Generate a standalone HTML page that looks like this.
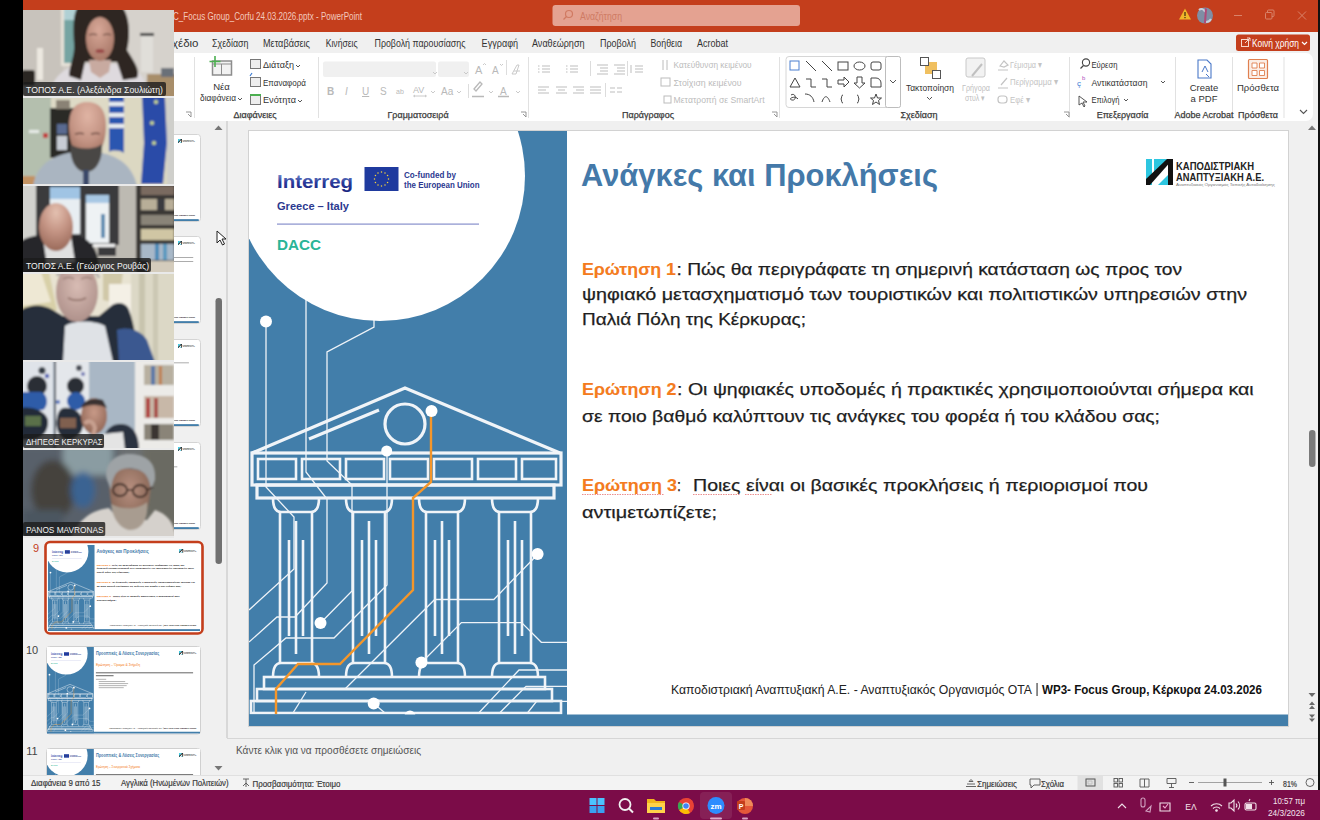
<!DOCTYPE html>
<html><head><meta charset="utf-8">
<style>
*{margin:0;padding:0;box-sizing:border-box}
html,body{width:1320px;height:820px;overflow:hidden;background:#000;font-family:"Liberation Sans",sans-serif}
.a{position:absolute}
#titlebar{left:23px;top:0;width:1295px;height:31px;background:#c43e1c}
#menurow{left:23px;top:31px;width:1295px;height:24px;background:#f0f0f0}
#ribbon{left:23px;top:55px;width:1290px;height:66px;background:#fff;border-radius:0 0 8px 8px}
#work{left:23px;top:121px;width:1295px;height:654px;background:#f0f0f0}
#status{left:23px;top:775px;width:1295px;height:15px;background:#f3f3f3}
#taskbar{left:23px;top:790px;width:1297px;height:30px;background:#7b0d48}
#rstrip{left:1318px;top:0;width:2px;height:790px;background:#111}
#slide{left:249px;top:131px;width:1039px;height:595px;background:#fff;overflow:hidden;box-shadow:0 0 1px #bbb}
.tile{left:23px;width:151px;height:86px;overflow:hidden}
.b{position:absolute;filter:blur(1px)}

</style></head>
<body>
<svg class="a" style="left:0;top:0" width="1320" height="122" viewBox="0 0 1320 122" font-family="Liberation Sans">
<rect x="23" y="0" width="1295" height="32" fill="#c43e1c"/>
<rect x="23" y="32" width="1295" height="90" fill="#f0f0f0"/>
<rect x="23" y="53" width="1290" height="68" rx="7" fill="#fff"/>
<rect x="23" y="53" width="20" height="20" fill="#fff"/>
<text x="173" y="19.5" font-size="10" fill="#f3c9bc" textLength="189" lengthAdjust="spacingAndGlyphs">C_Focus Group_Corfu 24.03.2026.pptx  -  PowerPoint</text>
<rect x="552.5" y="5" width="247.5" height="21" rx="3" fill="#e4a291"/>
<circle cx="569" cy="14" r="3.5" fill="none" stroke="#d07a62" stroke-width="1.2"/><path d="M566.5 16.5L563.5 19.5" stroke="#d07a62" stroke-width="1.3"/>
<text x="580" y="19.5" font-size="10" fill="#cf7b64" textLength="42" lengthAdjust="spacingAndGlyphs">Αναζήτηση</text>
<path d="M1185 8.5L1191 19.5H1179Z" fill="#f0b52a"/><rect x="1184.4" y="12" width="1.2" height="4" fill="#3a2a10"/><rect x="1184.4" y="17" width="1.2" height="1.2" fill="#3a2a10"/>
<circle cx="1205" cy="15.5" r="8" fill="#7f8ea4"/><path d="M1199 10c2-2 5-1 6 2M1211 19c-1 2-3 3-5 3" stroke="#c8d0dc" stroke-width="2" fill="none"/><path d="M1205 8L1207 9L1206 23L1204 23Z" fill="#b04a78"/>
<path d="M1234 15.5h8" stroke="#d9836a" stroke-width="1"/>
<rect x="1265.5" y="12.5" width="6.5" height="6.5" rx="1" fill="none" stroke="#d9836a" stroke-width="1"/><path d="M1267.5 12.5v-1.5a1 1 0 0 1 1-1h4.5a1 1 0 0 1 1 1v4.5a1 1 0 0 1-1 1h-1" fill="none" stroke="#d9836a" stroke-width="1"/>
<path d="M1298 11.5l8 8M1306 11.5l-8 8" stroke="#d9836a" stroke-width="1"/>
<g font-size="10.3" fill="#333">
<text x="172" y="47" textLength="26.5" lengthAdjust="spacingAndGlyphs">χέδιο</text>
<text x="212" y="47" textLength="36.5" lengthAdjust="spacingAndGlyphs">Σχεδίαση</text>
<text x="263" y="47" textLength="47" lengthAdjust="spacingAndGlyphs">Μεταβάσεις</text>
<text x="325.7" y="47" textLength="32" lengthAdjust="spacingAndGlyphs">Κινήσεις</text>
<text x="374.5" y="47" textLength="91" lengthAdjust="spacingAndGlyphs">Προβολή παρουσίασης</text>
<text x="481.6" y="47" textLength="36.5" lengthAdjust="spacingAndGlyphs">Εγγραφή</text>
<text x="532" y="47" textLength="52.5" lengthAdjust="spacingAndGlyphs">Αναθεώρηση</text>
<text x="600" y="47" textLength="36" lengthAdjust="spacingAndGlyphs">Προβολή</text>
<text x="650.5" y="47" textLength="31.5" lengthAdjust="spacingAndGlyphs">Βοήθεια</text>
<text x="697" y="47" textLength="31" lengthAdjust="spacingAndGlyphs">Acrobat</text>
</g>
<rect x="1236" y="34.5" width="74" height="16.5" rx="2.5" fill="#c43e1c"/>
<rect x="1241.5" y="39.5" width="7" height="7" fill="none" stroke="#f8d8cc" stroke-width="1"/><path d="M1245 43l5-5M1247 38h3v3" stroke="#f8d8cc" stroke-width="1" fill="none"/>
<text x="1252" y="46.5" font-size="10" fill="#fff" textLength="47" lengthAdjust="spacingAndGlyphs">Κοινή χρήση</text>
<path d="M1302 42l2.5 2.5 2.5-2.5" stroke="#fff" stroke-width="1.2" fill="none"/>
<!-- separators -->
<g fill="#e1e1e1">
<rect x="194" y="57" width="1" height="61"/><rect x="318" y="57" width="1" height="61"/><rect x="528" y="57" width="1" height="61"/>
<rect x="779" y="57" width="1" height="61"/><rect x="1069" y="57" width="1" height="61"/><rect x="1175" y="57" width="1" height="61"/><rect x="1232" y="57" width="1" height="61"/><rect x="1283.5" y="57" width="1" height="61"/>
</g>
<!-- group labels -->
<g font-size="9" fill="#3c3c3c" stroke="#3c3c3c" stroke-width=".25" text-anchor="middle">
<text x="255" y="117.5">Διαφάνειες</text>
<text x="418" y="117.5">Γραμματοσειρά</text>
<text x="648" y="117.5">Παράγραφος</text>
<text x="919" y="117.5">Σχεδίαση</text>
<text x="1122.6" y="117.5">Επεξεργασία</text>
<text x="1204" y="117.5">Adobe Acrobat</text>
<text x="1258" y="117.5">Πρόσθετα</text>
</g>
<g fill="none" stroke="#8a8a8a" stroke-width=".9">
<path d="M186 112h5v5M188 114l3 3"/><path d="M521 112h5v5M523 114l3 3"/><path d="M772 112h5v5M774 114l3 3"/><path d="M1064 112h5v5M1066 114l3 3"/><path d="M1300 110l3.5 3.5 3.5-3.5" stroke="#555" stroke-width="1.1"/>
</g>
<!-- slides group -->
<rect x="212.5" y="61" width="19" height="14" fill="#f2f2f2" stroke="#8d8d8d" stroke-width="1.5"/><path d="M221.5 64v11M213 64h18" stroke="#8d8d8d" stroke-width="1"/>
<path d="M215 56v11M209.5 61.5h11" stroke="#4caf50" stroke-width="1.6"/>
<g font-size="9.5" fill="#333">
<text x="221.5" y="90" text-anchor="middle">Νέα</text>
<text x="200" y="101" textLength="36" lengthAdjust="spacingAndGlyphs">διαφάνεια</text>
<path d="M238 98l2 2 2-2" stroke="#555" fill="none"/>
<text x="263" y="68" textLength="31" lengthAdjust="spacingAndGlyphs">Διάταξη</text><path d="M296 65l2 2 2-2" stroke="#555" fill="none"/>
<text x="263" y="85.5" textLength="43" lengthAdjust="spacingAndGlyphs">Επαναφορά</text>
<text x="263" y="103" textLength="33" lengthAdjust="spacingAndGlyphs">Ενότητα</text><path d="M298 100l2 2 2-2" stroke="#555" fill="none"/>
</g>
<rect x="250.5" y="59.5" width="10" height="9" fill="#eee" stroke="#777" stroke-width="1"/>
<rect x="250.5" y="77.5" width="10" height="9" fill="#eee" stroke="#777" stroke-width="1"/><path d="M250 76l2-3" stroke="#3b7bd4" stroke-width="1.2"/>
<rect x="250.5" y="95.5" width="10" height="9" fill="#eee" stroke="#777" stroke-width="1"/><rect x="250" y="94" width="11" height="2" fill="#4caf50"/>
<!-- font group -->
<rect x="323" y="61.5" width="113" height="15.5" rx="2" fill="#f0f0f0"/>
<rect x="438" y="61.5" width="31" height="15.5" rx="2" fill="#f0f0f0"/>
<g font-size="11" fill="#b9b9b9">
<text x="475" y="74">A</text><text x="492" y="74" font-size="10">A</text>
<text x="327" y="95" font-weight="bold" font-size="10">B</text><text x="345" y="95" font-style="italic" font-size="10">I</text><text x="362" y="95" font-size="10" text-decoration="underline">U</text><text x="380" y="95" font-size="10">S</text>
<text x="396" y="94" font-size="7">ab</text><text x="413" y="93" font-size="9">AV</text><text x="441" y="95" font-size="10">Aa</text>
<text x="500" y="95" font-size="10">A</text>
</g>
<g stroke="#c4c4c4" fill="none" stroke-width=".9">
<path d="M483 65l1.5-1.5 1.5 1.5M500 64l1.5 1.5 1.5-1.5"/>
<path d="M431 91l2 2 2-2M457 91l2 2 2-2M489 91l2 2 2-2M516 91l2 2 2-2M433 72l2 2 2-2M464 72l2 2 2-2"/>
<path d="M512 74l5-9h2l-3 9zM514 71h6"/>
<path d="M414 96h12M415 95l-1.5 1 1.5 1M425 95l1.5 1-1.5 1"/>
</g>
<path d="M474 89l6-7 2 2-6 7zM472 96.5h12M498 96.5h11" stroke="#b9b9b9" stroke-width="1.3" fill="none"/>
<rect x="468" y="84" width="1" height="14" fill="#ddd"/><rect x="506" y="60" width="1" height="15" fill="#ddd"/>
<!-- paragraph group -->
<g stroke="#bdbdbd" stroke-width="1" fill="none">
<path d="M542 66h8M542 69h8M542 72h8M538 66h1.5M538 69h1.5M538 72h1.5"/>
<path d="M570 66h8M570 69h8M570 72h8M566 66h1.5M566 69h1.5M566 72h1.5"/>
<path d="M597 65h11M600 68h8M600 71h8M597 74h11"/><path d="M614 65h11M617 68h8M617 71h8M614 74h11"/>
<path d="M635 66h8M635 69h8M635 72h8M631 65v8"/>
<path d="M538 87h11M538 90h8M538 93h11"/><path d="M556 87h11M558 90h7M556 93h11"/><path d="M573 87h11M576 90h8M573 93h11"/><path d="M590 87h11M590 90h11M590 93h11"/>
<path d="M610 88h5M617 88h5M610 92h5M617 92h5"/>
</g>
<g fill="#dcdcdc"><rect x="590" y="61" width="1" height="15"/><rect x="627" y="61" width="1" height="15"/><rect x="605" y="83" width="1" height="14"/></g>
<g font-size="9.5" fill="#bcbcbc">
<text x="673.6" y="67.5" textLength="78" lengthAdjust="spacingAndGlyphs">Κατεύθυνση κειμένου</text>
<text x="673.6" y="85.5" textLength="68" lengthAdjust="spacingAndGlyphs">Στοίχιση κειμένου</text>
<text x="673.6" y="103" textLength="91" lengthAdjust="spacingAndGlyphs">Μετατροπή σε SmartArt</text>
</g>
<g stroke="#bcbcbc" fill="none" stroke-width="1"><path d="M663 60v10M667 60v10"/><rect x="661" y="78" width="9" height="8"/><rect x="664" y="96" width="7" height="7"/></g>
<!-- drawing group -->
<rect x="786" y="56.5" width="114.5" height="51" rx="3" fill="#fff" stroke="#d6d6d6" stroke-width="1"/>
<rect x="885.5" y="56.5" width="15" height="51" rx="2" fill="#fff" stroke="#bdbdbd" stroke-width="1"/>
<path d="M890 80l3 3 3-3" stroke="#555" fill="none"/>
<g stroke="#444" stroke-width="1" fill="none">
<rect x="790" y="61" width="9" height="9" stroke="#4a7fd0"/>
<path d="M806 61l10 10M822 61l10 10"/><rect x="838" y="62" width="10" height="8"/><ellipse cx="859.5" cy="66" rx="5.5" ry="4"/><rect x="871" y="62" width="10" height="8" rx="2"/>
<path d="M790 87l5-9 5 9z"/><path d="M806 79h5v8h5M822 79h5v8h5"/><path d="M838 80h6v-3l5 5-5 5v-3h-6z"/><path d="M857 77h5v6h3l-5.5 5-5.5-5h3z"/><path d="M871 78h5a5 5 0 0 1 5 5v4h-10z"/>
<path d="M791 95c5-3 6 6 1 5s3-5 6-1"/><path d="M805 94c5 0 8 3 9 8"/><path d="M822 102c2-6 5-8 8 0"/><path d="M843 95c-2 0-1 3-2 4 1 1 0 4 2 4"/><path d="M857 95c2 0 1 3 2 4-1 1 0 4-2 4"/><path d="M876 94l1.5 4h4l-3 2.5 1 4-3.5-2.5-3.5 2.5 1-4-3-2.5h4z"/>
</g>
<rect x="925" y="62" width="12" height="12" fill="#f0c060"/><rect x="920.5" y="57.5" width="8" height="8" fill="#fff" stroke="#555"/><rect x="932.5" y="70.5" width="8" height="8" fill="#fff" stroke="#555"/>
<text x="906" y="90.5" font-size="9.5" fill="#333" textLength="48" lengthAdjust="spacingAndGlyphs">Τακτοποίηση</text>
<path d="M927 97l2.5 2.5 2.5-2.5" stroke="#555" fill="none"/>
<rect x="966" y="58" width="19" height="19" rx="2" fill="#f2f2f2" stroke="#c8c8c8"/><path d="M972 76l10-12" stroke="#c0c0c0" stroke-width="2"/>
<text x="962" y="90.5" font-size="9" fill="#c0c0c0" textLength="28" lengthAdjust="spacingAndGlyphs">Γρήγορα</text>
<text x="965" y="101" font-size="9" fill="#c0c0c0" textLength="20" lengthAdjust="spacingAndGlyphs">στυλ ▾</text>
<g font-size="9.5" fill="#c4c4c4">
<text x="1010" y="67.5" textLength="32" lengthAdjust="spacingAndGlyphs">Γέμισμα ▾</text>
<text x="1010" y="85" textLength="48" lengthAdjust="spacingAndGlyphs">Περίγραμμα ▾</text>
<text x="1010" y="102.5" textLength="20" lengthAdjust="spacingAndGlyphs">Εφέ ▾</text>
</g>
<g stroke="#c4c4c4" fill="none" stroke-width="1.2"><path d="M998 70h10M1000 66l4-5 4 4-4 2z"/><path d="M998 88h10M1001 85l6-7"/><rect x="998" y="96" width="9" height="7" rx="3"/></g>
<!-- editing -->
<circle cx="1086" cy="62.5" r="3.6" fill="none" stroke="#444" stroke-width="1.1"/><path d="M1083.5 65.5l-3 3" stroke="#444" stroke-width="1.3"/>
<g font-size="9.5" fill="#333">
<text x="1091.5" y="68" textLength="26" lengthAdjust="spacingAndGlyphs">Εύρεση</text>
<text x="1091.5" y="85.5" textLength="56" lengthAdjust="spacingAndGlyphs">Αντικατάσταση</text>
<text x="1091.5" y="103" textLength="28" lengthAdjust="spacingAndGlyphs">Επιλογή</text>
</g>
<path d="M1161 81l2 2 2-2M1124 99l2 2 2-2" stroke="#555" fill="none"/>
<text x="1077" y="86" font-size="8" fill="#3a7bd5">ç</text><text x="1082" y="80" font-size="6" fill="#b04fc0">b</text>
<path d="M1079 96v9l3-2 2 4 1-1-2-4h4z" fill="none" stroke="#444" stroke-width=".9"/>
<!-- acrobat -->
<path d="M1198 60h9l4 4v14h-13z" fill="#fff" stroke="#4a78c8" stroke-width="1.1"/><path d="M1202 72l3-6 3 6M1206 74l3 3" stroke="#4a78c8" fill="none"/>
<text x="1204" y="90.5" font-size="9.5" fill="#333" text-anchor="middle">Create</text>
<text x="1204" y="101.5" font-size="9.5" fill="#333" text-anchor="middle">a PDF</text>
<rect x="1248.5" y="59.5" width="19" height="19" rx="1" fill="#fbeee6" stroke="#e08050" stroke-width="1.2"/><path d="M1252 63h5v5h-5zM1259.5 63h5v5h-5zM1252 70.5h5v5h-5zM1259.5 70.5h5v5h-5z" fill="#fff" stroke="#e08050" stroke-width=".9"/>
<text x="1258" y="90.5" font-size="9.5" fill="#333" text-anchor="middle">Πρόσθετα</text>
</svg>

<div id="work" class="a"></div>
<div id="rstrip" class="a"></div>
<!-- thumbnails panel -->
<svg class="a" style="left:23px;top:121px" width="204" height="654" viewBox="23 121 204 654" font-family="Liberation Sans">
<rect x="23" y="121" width="204" height="654" fill="#f0f0f0"/>
<g>
<rect x="46.5" y="134.5" width="154" height="87" rx="3" fill="#fff" stroke="#d4d4d4"/>
<svg x="47" y="135" width="153" height="86" viewBox="249 131 1039 595"><use href="#tpl"/></svg>
<rect x="46.5" y="236.5" width="154" height="87" rx="3" fill="#fff" stroke="#d4d4d4"/>
<svg x="47" y="237" width="153" height="86" viewBox="249 131 1039 595"><use href="#tpl"/><g fill="#777" opacity=".7"><rect x="581" y="270" width="670" height="6"/><rect x="581" y="298" width="670" height="6"/></g></svg>
<rect x="46.5" y="339.5" width="154" height="87" rx="3" fill="#fff" stroke="#d4d4d4"/>
<svg x="47" y="340" width="153" height="86" viewBox="249 131 1039 595"><use href="#tpl"/><g fill="#777" opacity=".7"><rect x="581" y="286" width="640" height="6"/></g></svg>
<rect x="46.5" y="442.5" width="154" height="87" rx="3" fill="#fff" stroke="#d4d4d4"/>
<svg x="47" y="443" width="153" height="86" viewBox="249 131 1039 595"><use href="#tpl"/><g fill="#777" opacity=".7"><rect x="581" y="293" width="560" height="6"/></g></svg>
<rect x="45.5" y="542" width="157" height="91.5" rx="4.5" fill="#fff" stroke="#c43e1c" stroke-width="2.6"/>
<svg x="48" y="545" width="152" height="86" viewBox="249 131 1039 595" preserveAspectRatio="none"><use href="#tpl"/><use href="#txt"/></svg>
<rect x="46.5" y="646.5" width="154" height="87.5" rx="3" fill="#fff" stroke="#d0d0d0"/>
<svg x="47" y="647" width="153" height="86.5" viewBox="249 131 1039 595" preserveAspectRatio="none"><use href="#tpl"/>
<text x="581" y="186" font-weight="bold" font-size="31" fill="#4479a9" textLength="430" lengthAdjust="spacingAndGlyphs">Προοπτικές &amp; Λύσεις Συνεργασίας</text>
<text x="581" y="265" font-size="24" fill="#f47b20" textLength="300" lengthAdjust="spacingAndGlyphs">Ερώτηση – Όραμα &amp; Στήριξη</text>
<rect x="581" y="305" width="660" height="7" fill="#666"/><rect x="581" y="325" width="120" height="7" fill="#666"/>
<g fill="#aaa"><rect x="581" y="350" width="70" height="6"/><rect x="600" y="366" width="180" height="6"/><rect x="600" y="380" width="200" height="6"/><rect x="600" y="394" width="190" height="6"/><rect x="600" y="408" width="170" height="6"/></g>
</svg>
<rect x="46.5" y="748.5" width="154" height="87" rx="3" fill="#fff" stroke="#d0d0d0"/>
<svg x="47" y="749" width="153" height="86" viewBox="249 131 1039 595" preserveAspectRatio="none"><use href="#tpl"/>
<text x="581" y="186" font-weight="bold" font-size="31" fill="#4479a9" textLength="430" lengthAdjust="spacingAndGlyphs">Προοπτικές &amp; Λύσεις Συνεργασίας</text>
<text x="581" y="265" font-size="24" fill="#f47b20" textLength="300" lengthAdjust="spacingAndGlyphs">Ερώτηση – Συνεργατικά Σχήματα</text>
<rect x="581" y="305" width="660" height="7" fill="#666"/>
</svg>
<rect x="23" y="768" width="204" height="7" fill="#f0f0f0" opacity="0"/>
<text x="36" y="551.5" font-size="11" fill="#c43e1c" text-anchor="middle">9</text>
<text x="32" y="653.5" font-size="11" fill="#444" text-anchor="middle">10</text>
<text x="32" y="755" font-size="11" fill="#444" text-anchor="middle">11</text>
<path d="M214.5 130l4-4.5 4 4.5z" fill="#777"/>
<path d="M214.5 766l4 4.5 4-4.5z" fill="#777"/>
<rect x="215.5" y="298" width="6.5" height="266" rx="3.2" fill="#707070"/>
</svg>
<div class="a" style="left:226px;top:121px;width:1.5px;height:617px;background:#d8d8d8"></div>
<!-- main area scrollbar -->
<svg class="a" style="left:1290px;top:121px" width="28" height="654" viewBox="1290 121 28 654">
<path d="M1308 130l4-4.5 4 4.5z" fill="#777"/>
<rect x="1309" y="430" width="6.5" height="37" rx="3.2" fill="#7a7a7a"/>
<path d="M1308.5 693l3.5 4 3.5-4z" fill="#6a6a6a"/>
<path d="M1309 705l3-3.5 3 3.5zM1309 709l3-3.5 3 3.5z" fill="#6a6a6a"/>
<path d="M1309 714.5l3 3.5 3-3.5zM1309 718.5l3 3.5 3-3.5z" fill="#6a6a6a"/>
</svg>
<!-- notes -->
<div class="a" style="left:227px;top:738px;width:1091px;height:1px;background:#d6d6d6"></div>
<div class="a" style="left:227px;top:739px;width:1091px;height:36px;background:#f0f0f0"></div>
<svg class="a" style="left:0;top:738px" width="1320" height="82" viewBox="0 738 1320 82" font-family="Liberation Sans">
<text x="236" y="753.5" font-size="10.5" fill="#555" textLength="185" lengthAdjust="spacingAndGlyphs">Κάντε κλικ για να προσθέσετε σημειώσεις</text>
<rect x="23" y="775" width="1295" height="15" fill="#f3f3f3"/>
<rect x="23" y="775" width="1295" height="1" fill="#e0e0e0"/>
<g font-size="9" fill="#3a3a3a" stroke="#3a3a3a" stroke-width=".2">
<text x="31" y="786" textLength="69.5" lengthAdjust="spacingAndGlyphs">Διαφάνεια 9 από 15</text>
<text x="121" y="786" textLength="107.5" lengthAdjust="spacingAndGlyphs">Αγγλικά (Ηνωμένων Πολιτειών)</text>
<text x="252.5" y="786.5" textLength="88" lengthAdjust="spacingAndGlyphs">Προσβασιμότητα: Έτοιμο</text>
<text x="977" y="786.5" textLength="40" lengthAdjust="spacingAndGlyphs">Σημειώσεις</text>
<text x="1041" y="786.5" textLength="23" lengthAdjust="spacingAndGlyphs">Σχόλια</text>
<text x="1283" y="786.5" textLength="14" lengthAdjust="spacingAndGlyphs">81%</text>
</g>
<g stroke="#555" fill="none" stroke-width=".9">
<path d="M243 779h6M246 779v8M243 786l3-3 3 3"/>
<path d="M967 784h8M966 786.5h10M969 781.5h4l-2-2z"/>
<path d="M1030 779h10v6h-6l-3 3v-3h-1z"/>
<rect x="1086" y="779" width="9" height="7"/><path d="M1088 781h4v3h-4z"/>
<rect x="1114" y="778.5" width="3.5" height="3.5"/><rect x="1119" y="778.5" width="3.5" height="3.5"/><rect x="1114" y="783.5" width="3.5" height="3.5"/><rect x="1119" y="783.5" width="3.5" height="3.5"/>
<path d="M1140 779h9v8h-9zM1144.5 779v8"/>
<path d="M1167 778.5h9v5h-9zM1171.5 783.5v4M1169 787.5h5"/>
<path d="M1189 782.5h5M1269 782.5h5M1271.5 780v5"/>
<path d="M1198 782.5h64" stroke="#999"/>
<circle cx="1310" cy="782.5" r="4"/>
</g>
<rect x="1077.5" y="776" width="25.5" height="14" fill="#dcdcdc" opacity=".8"/>
<rect x="1086" y="779" width="9" height="7" fill="none" stroke="#555" stroke-width=".9"/>
<rect x="1223.5" y="778.5" width="3" height="8" fill="#555"/>
<!-- taskbar -->
<rect x="23" y="790" width="1297" height="30" fill="#7b0c48"/>
<rect x="700" y="792" width="32" height="27" rx="4" fill="#8b2a5c" opacity=".7"/>
<g>
<rect x="589.5" y="798" width="7" height="7" fill="#4cc2ff"/><rect x="597.5" y="798" width="7" height="7" fill="#4cc2ff"/><rect x="589.5" y="806" width="7" height="7" fill="#3aa0f0"/><rect x="597.5" y="806" width="7" height="7" fill="#3aa0f0"/>
<circle cx="625" cy="804.5" r="5.5" fill="none" stroke="#f0f0f0" stroke-width="1.8"/><path d="M629 808.5l4 4" stroke="#f0f0f0" stroke-width="2"/>
<path d="M647 799h7l2 2h9v12h-18z" fill="#f2b51c"/><rect x="647" y="803" width="18" height="10" fill="#ffd24a"/><rect x="650" y="807" width="12" height="3" fill="#2b7bd6"/>
<circle cx="686" cy="806" r="8" fill="#e94335"/><path d="M686 806L679 810a8 8 0 0 0 11 3z" fill="#fbbc04"/><path d="M686 806l-7 4a8 8 0 0 1 0-8z" fill="#34a853"/><path d="M686 798a8 8 0 0 1 7 4h-7z" fill="#e94335"/><circle cx="686" cy="806" r="3.6" fill="#fff"/><circle cx="686" cy="806" r="2.8" fill="#4285f4"/>
<circle cx="716" cy="805.5" r="8.5" fill="#2d8cff"/><text x="716" y="808.5" font-size="8" font-weight="bold" fill="#fff" text-anchor="middle">zm</text>
<circle cx="745" cy="806" r="8" fill="#e5573a"/><path d="M745 798a8 8 0 0 1 8 8h-8z" fill="#f08a5a"/><rect x="737" y="801" width="8" height="9" rx="1" fill="#c43e1c"/><text x="741" y="808.5" font-size="7" font-weight="bold" fill="#fff" text-anchor="middle">P</text>
<rect x="653" y="817.5" width="6" height="2" rx="1" fill="#d8a0c0"/><rect x="710" y="817.5" width="12" height="2" rx="1" fill="#e0a8c8"/><rect x="742" y="817.5" width="6" height="2" rx="1" fill="#d8a0c0"/>
</g>
<g stroke="#f0e0e8" fill="none" stroke-width="1.1">
<path d="M1118 808l4-4 4 4"/>
<path d="M1141 800v5a2 2 0 0 0 4 0v-5a2 2 0 0 0-4 0M1146 811l5-5-1 6z" stroke="#d0a0c0"/>
<path d="M1160 803h10v8h-10z"/><path d="M1163 806l2 2 3-4" stroke="#f0a8d0"/>
<path d="M1211 806a8 8 0 0 1 11 0M1213 808.5a5 5 0 0 1 7 0"/><circle cx="1216.5" cy="810.5" r=".8" fill="#f0e0e8"/>
<path d="M1229 803h2l3-3v11l-3-3h-2zM1236 803.5a3 3 0 0 1 0 4M1238 801.5a6 6 0 0 1 0 8"/>
<rect x="1245" y="803" width="11" height="7" rx="1.5"/><rect x="1246.5" y="804.5" width="5" height="4" fill="#f0e0e8"/><path d="M1249 801l1-2"/>
</g>
<text x="1191" y="810" font-size="8.5" fill="#f4e6ee" text-anchor="middle">ΕΛ</text>
<text x="1305" y="804" font-size="8.5" fill="#f4e6ee" text-anchor="end" textLength="32" lengthAdjust="spacingAndGlyphs">10:57 πμ</text>
<text x="1305" y="815.5" font-size="8.5" fill="#f4e6ee" text-anchor="end" textLength="37" lengthAdjust="spacingAndGlyphs">24/3/2026</text>
</svg>
<div class="a" style="left:248px;top:130px;width:1041px;height:597px;background:#d2d2d2"></div>
<svg class="a" style="left:249px;top:131px" width="1039" height="595" viewBox="249 131 1039 595">
<g id="tpl"><rect x="249" y="131" width="1039" height="595" fill="#fff"/>
<rect x="249" y="131" width="318" height="595" fill="#427eaa"/>
<rect x="249" y="715" width="1039" height="11" fill="#427eaa"/>
<g stroke="#eef3f8" fill="none" stroke-width="1.3">
<path d="M266 322V487L294 517V569L249 610"/>
<path d="M306 131V472L327 499V583L295 617H277L249 642"/>
<path d="M254 713V665L286 638H334L387 585V451"/>
<path d="M374 131V327L327 352V461L352 485V591L320.5 623"/>
<path d="M537.8 554.3L493.8 599.5H434.7L345 689"/>
<path d="M420.8 663.2L461.4 622.6H521.6L541.3 642.3H567"/>
<path d="M567 670H519L478.7 713"/>
<path d="M567 686.3H526L499.6 713"/>
<path d="M567 701.4H536.6L527.4 713"/>
<path d="M373.7 703.6L385 713"/>
<path d="M293 713L306 692"/>
</g>
<g stroke="#f0f4f8" fill="none" stroke-width="3.2">
<path d="M252 453L405 388L560 453"/>
<circle cx="405" cy="424" r="20"/>
<path d="M309 439L379 410"/>
<rect x="252" y="453" width="309" height="32"/>
<rect x="257" y="485" width="297" height="13"/>
</g>
<g stroke="#f0f4f8" fill="none" stroke-width="2.6">
<rect x="258" y="459" width="38" height="20"/><rect x="302" y="459" width="38" height="20"/><rect x="346" y="459" width="38" height="20"/><rect x="390" y="459" width="38" height="20"/><rect x="434" y="459" width="38" height="20"/><rect x="478" y="459" width="38" height="20"/><rect x="522" y="459" width="34" height="20"/>
</g>
<g id="col" stroke="#f0f4f8" fill="none" stroke-width="2.6">
<path d="M273 498Q273 512 281 512H311Q319 512 319 498"/>
<path d="M280 512V663M312 512V663"/>
<path d="M273 677Q273 663 281 663H311Q319 663 319 677"/>
<path d="M296 521V654M289 540V636M303 540V636"/>
</g>
<use href="#col" x="73"/><use href="#col" x="146"/><use href="#col" x="219"/>
<g stroke="#f0f4f8" fill="none" stroke-width="2.6">
<rect x="264" y="677" width="281" height="12"/>
<rect x="257" y="689" width="295" height="12"/>
<rect x="251" y="701" width="310" height="12"/>
</g>
<path d="M431 411V482L413 498V590L340 664H298L276 689V714" stroke="#f4962a" stroke-width="2.4" fill="none"/>
<g fill="#fff">
<circle cx="266" cy="321.5" r="6"/><circle cx="431.5" cy="411" r="6"/><circle cx="386.7" cy="451" r="5.5"/>
<circle cx="320.5" cy="623" r="6"/><circle cx="421.4" cy="662.6" r="6"/><circle cx="537.6" cy="554" r="6"/>
<circle cx="373.7" cy="703.6" r="6"/><circle cx="410" cy="716" r="5.5"/>
</g><rect x="249" y="714.5" width="1039" height="11.5" fill="#427eaa"/>

<circle cx="380" cy="176" r="145" fill="#fff"/>
<linearGradient id="igr" x1="0" y1="0" x2="0" y2="1"><stop offset="0" stop-color="#8fa8e0"/><stop offset=".55" stop-color="#2a3a9a"/><stop offset="1" stop-color="#1a2480"/></linearGradient><text x="277" y="188" font-family="Liberation Sans" font-weight="bold" font-size="19" fill="url(#igr)" textLength="76" lengthAdjust="spacingAndGlyphs">Interreg</text>
<rect x="364.5" y="167" width="34" height="24" fill="#1f3a9e"/>
<g fill="#f4d23c"><circle cx="388.50" cy="179.00" r=".75"/><circle cx="387.56" cy="182.50" r=".75"/><circle cx="385.00" cy="185.06" r=".75"/><circle cx="381.50" cy="186.00" r=".75"/><circle cx="378.00" cy="185.06" r=".75"/><circle cx="375.44" cy="182.50" r=".75"/><circle cx="374.50" cy="179.00" r=".75"/><circle cx="375.44" cy="175.50" r=".75"/><circle cx="378.00" cy="172.94" r=".75"/><circle cx="381.50" cy="172.00" r=".75"/><circle cx="385.00" cy="172.94" r=".75"/><circle cx="387.56" cy="175.50" r=".75"/></g>
<text x="404" y="177.5" font-family="Liberation Sans" font-weight="bold" font-size="9" fill="#2b3990" textLength="52" lengthAdjust="spacingAndGlyphs">Co-funded by</text>
<text x="404" y="187.5" font-family="Liberation Sans" font-weight="bold" font-size="9" fill="#2b3990" textLength="75.5" lengthAdjust="spacingAndGlyphs">the European Union</text>
<text x="277" y="210" font-family="Liberation Sans" font-weight="bold" font-size="11" fill="#2b3990" textLength="72" lengthAdjust="spacingAndGlyphs">Greece – Italy</text>
<rect x="277" y="223.5" width="202" height="1.2" fill="#8890cc"/>
<text x="277" y="250" font-family="Liberation Sans" font-weight="bold" font-size="14.5" fill="#2ab597" textLength="44" lengthAdjust="spacingAndGlyphs">DACC</text>
<text x="671" y="694.2" font-family="Liberation Sans" font-size="12" fill="#222" textLength="361" lengthAdjust="spacingAndGlyphs">Καποδιστριακή Αναπτυξιακή Α.Ε. - Αναπτυξιακός Οργανισμός ΟΤΑ</text><rect x="1036.5" y="683" width="1.1" height="13" fill="#333"/><text x="1042" y="694.2" font-family="Liberation Sans" font-size="12" font-weight="bold" fill="#111" textLength="220" lengthAdjust="spacingAndGlyphs">WP3- Focus Group, Κέρκυρα 24.03.2026</text>
<!-- logo -->
<g transform="translate(1146 159)">
<rect x="0" y="0" width="27" height="26" fill="#fff"/>
<path d="M0 0H6V26H0Z" fill="#2dc6e0"/>
<path d="M8 0H22L8 14Z" fill="#2dc6e0"/>
<path d="M12 26L22 16V26Z" fill="#2dc6e0"/>
<path d="M0 26L0 20L21 0H27L4 26Z" fill="#111"/>
<path d="M22 0H27V26H22Z" fill="#111"/>
</g>
<text x="1176" y="170" font-family="Liberation Sans" font-weight="bold" font-size="11" fill="#222" textLength="78" lengthAdjust="spacingAndGlyphs">ΚΑΠΟΔΙΣΤΡΙΑΚΗ</text>
<text x="1176" y="181" font-family="Liberation Sans" font-weight="bold" font-size="11" fill="#222" textLength="88" lengthAdjust="spacingAndGlyphs">ΑΝΑΠΤΥΞΙΑΚΗ Α.Ε.</text>
<text x="1176" y="185.5" font-family="Liberation Sans" font-size="3" fill="#777" textLength="99" lengthAdjust="spacingAndGlyphs">Αναπτυξιακός Οργανισμός Τοπικής Αυτοδιοίκησης</text>
</g><g id="txt"><text x="581" y="186" font-family="Liberation Sans" font-weight="bold" font-size="31" fill="#4479a9" textLength="357" lengthAdjust="spacingAndGlyphs">Ανάγκες και Προκλήσεις</text>
<g font-family="Liberation Sans" font-size="17.2" fill="#1e1e1e" stroke="#1e1e1e" stroke-width=".25">
<text x="582" y="275.2" font-weight="bold" fill="#f47b20" stroke="#f47b20" stroke-width=".1" textLength="94" lengthAdjust="spacingAndGlyphs">Ερώτηση 1</text>
<text x="676.5" y="275.2" textLength="505.5" lengthAdjust="spacingAndGlyphs">: Πώς θα περιγράφατε τη σημερινή κατάσταση ως προς τον</text>
<text x="582" y="299.5" textLength="665" lengthAdjust="spacingAndGlyphs">ψηφιακό μετασχηματισμό των τουριστικών και πολιτιστικών υπηρεσιών στην</text>
<text x="582" y="324.8" textLength="224" lengthAdjust="spacingAndGlyphs">Παλιά Πόλη της Κέρκυρας;</text>
<text x="582" y="395.2" font-weight="bold" fill="#f47b20" stroke="#f47b20" stroke-width=".1" textLength="94.5" lengthAdjust="spacingAndGlyphs">Ερώτηση 2</text>
<text x="677" y="395.2" textLength="576.7" lengthAdjust="spacingAndGlyphs">: Οι ψηφιακές υποδομές ή πρακτικές χρησιμοποιούνται σήμερα και</text>
<text x="582" y="422.2" textLength="578" lengthAdjust="spacingAndGlyphs">σε ποιο βαθμό καλύπτουν τις ανάγκες του φορέα ή του κλάδου σας;</text>
<text x="582" y="491" font-weight="bold" fill="#f47b20" stroke="#f47b20" stroke-width=".1" textLength="95" lengthAdjust="spacingAndGlyphs">Ερώτηση 3</text>
<text x="677" y="491" textLength="4" lengthAdjust="spacingAndGlyphs">:</text>
<text x="693" y="491" textLength="455" lengthAdjust="spacingAndGlyphs">Ποιες είναι οι βασικές προκλήσεις ή περιορισμοί που</text>
<text x="582" y="517.7" textLength="135" lengthAdjust="spacingAndGlyphs">αντιμετωπίζετε;</text>
</g>
<g stroke="#e05050" stroke-width=".8" fill="none" opacity=".8">
<path d="M582 494.5h82M693 494.5h47.5M745 494.5h27" stroke-dasharray="1.5 1"/>
</g>
</g></svg>


<div class="a" style="left:23px;top:96px;width:151px;height:442px;background:#e9e9e9"></div>
<svg width="0" height="0" style="position:absolute"><defs><filter id="bl" x="-5%" y="-5%" width="110%" height="110%"><feGaussianBlur stdDeviation="0.9"/></filter><filter id="bl3"><feGaussianBlur stdDeviation="3"/></filter>
<radialGradient id="sk1" cx=".45" cy=".3" r=".7"><stop offset="0" stop-color="#d8a898"/><stop offset="1" stop-color="#a87868"/></radialGradient>
<radialGradient id="sk2" cx=".5" cy=".25" r=".75"><stop offset="0" stop-color="#e0b4a4"/><stop offset=".6" stop-color="#c49484"/><stop offset="1" stop-color="#a07060"/></radialGradient>
<radialGradient id="sk3" cx=".5" cy=".2" r=".8"><stop offset="0" stop-color="#e4c0b0"/><stop offset=".5" stop-color="#c49484"/><stop offset="1" stop-color="#9a6a5a"/></radialGradient>
<radialGradient id="sk4" cx=".5" cy=".4" r=".7"><stop offset="0" stop-color="#d8bcb4"/><stop offset="1" stop-color="#a88a84"/></radialGradient>
<radialGradient id="sk5" cx=".5" cy=".4" r=".7"><stop offset="0" stop-color="#c89a88"/><stop offset="1" stop-color="#8a6050"/></radialGradient>
<radialGradient id="sk6" cx=".5" cy=".35" r=".7"><stop offset="0" stop-color="#b89080"/><stop offset="1" stop-color="#7a5a4a"/></radialGradient>
</defs></svg>
<!-- tile 1 -->
<svg class="a tile" style="top:10px" viewBox="0 0 151 86">
<g filter="url(#bl)">
<rect x="-2" y="-2" width="155" height="90" fill="#cfcac4"/>
<rect x="-2" y="-2" width="42" height="90" fill="#c8c3bc"/>
<rect x="38" y="-2" width="24" height="58" fill="#e6e2d8"/>
<rect x="41" y="-2" width="17" height="55" fill="#74a4a2"/>
<rect x="41" y="-2" width="17" height="12" fill="#b0d0d4"/>
<rect x="100" y="-2" width="53" height="72" fill="#d6d2cc"/>
<rect x="118" y="25" width="12" height="37" fill="#e0ded9"/><rect x="117" y="23" width="14" height="3" fill="#3a3a3a"/>
<rect x="14" y="38" width="6" height="32" fill="#ece8e0"/>
<rect x="-2" y="60" width="14" height="16" rx="3" fill="#2a2622"/>
<rect x="124" y="64" width="29" height="24" fill="#a88e6a"/>
<rect x="138" y="58" width="13" height="9" fill="#6a7078"/>
<path d="M26 88C28 70 38 58 58 54H98C116 58 124 70 128 88Z" fill="#dedade"/>
<path d="M54 -2H100C106 6 108 24 104 40C110 50 118 60 114 68L100 70L94 52H62L58 70L46 66C46 56 52 46 51 34C50 18 50 6 54 -2Z" fill="#2f2621"/>
<path d="M66 50H88L86 62L77 68L68 62Z" fill="#c8aaa0"/>
<ellipse cx="77" cy="29" rx="14" ry="22" fill="url(#sk1)"/>
<path d="M66 25c3-1 6-1 8 0M80 25c3-1 6-1 8 0" stroke="#6a4a40" stroke-width="1.3" fill="none"/>
<ellipse cx="77" cy="41" rx="4.5" ry="2" fill="#9a4a48"/>
</g>
<svg class="lbl" x="0" y="72" width="143" height="14" viewBox="0 0 143 14"><rect width="143" height="14" rx="2" fill="rgba(28,28,28,.8)"/><text x="3" y="11" font-family="Liberation Sans" font-size="9.6" fill="#f2f2f2" textLength="137" lengthAdjust="spacingAndGlyphs">ΤΟΠΟΣ Α.Ε. (Αλεξάνδρα Σουλιώτη)</text></svg>
</svg>
<!-- tile 2 -->
<svg class="a tile" style="top:98px" viewBox="0 0 151 86">
<g filter="url(#bl)">
<rect x="-2" y="-2" width="155" height="90" fill="#dedac6"/>
<rect x="-2" y="-2" width="30" height="90" fill="#b4bfae"/>
<rect x="6" y="32" width="10" height="3" fill="#e8ece8"/><rect x="20" y="35" width="5" height="5" fill="#c04040"/>
<rect x="27" y="10" width="24" height="50" fill="#2c2a28"/>
<rect x="33" y="2" width="14" height="9" fill="#8a8274"/>
<rect x="34" y="26" width="10" height="10" fill="#5a6a90"/><rect x="34" y="38" width="10" height="14" fill="#c8ccd4"/>
<rect x="-2" y="78" width="14" height="10" fill="#c29262"/>
<rect x="84" y="-2" width="60" height="90" fill="#dcd8c2"/>
<path d="M86 -2H101V55C96 52 90 52 86 54Z" fill="#2a56b0"/>
<rect x="86" y="4" width="15" height="4" fill="#e8ecf0"/><rect x="86" y="15" width="15" height="4" fill="#e8ecf0"/><rect x="86" y="26" width="15" height="4" fill="#e8ecf0"/>
<path d="M119 -2H142L144 45L140 86H118L121 45Z" fill="#2c4ca8"/>
<g fill="#c9d88e"><circle cx="133" cy="4" r="2"/><circle cx="129" cy="25" r="2"/><circle cx="131" cy="45" r="2"/></g>
<rect x="144" y="-2" width="9" height="90" fill="#cfcfcb"/>
<path d="M10 88C14 64 34 54 62 53C88 54 108 62 114 88Z" fill="#aab5c1"/>
<path d="M46 28C46 10 54 4 64 4C75 4 83 10 83 28C83 44 78 58 64 60C50 58 46 44 46 28Z" fill="url(#sk2)"/>
<path d="M47 46C47 66 55 74 63 74C72 74 80 64 79 46C72 52 55 52 47 46Z" fill="#4a4744"/>
<path d="M52 36c4-1 7-1 9 0M68 36c4-1 7-1 9 0" stroke="#6a4a40" stroke-width="1.3" fill="none"/>
<rect x="60" y="72" width="6" height="16" fill="#3a4a6a"/>
</g>
</svg>
<!-- tile 3 -->
<svg class="a tile" style="top:186px" viewBox="0 0 151 86">
<g filter="url(#bl)">
<rect x="-2" y="-2" width="155" height="90" fill="#bdbab2"/>
<rect x="-2" y="-2" width="16" height="90" fill="#d2d2ce"/>
<rect x="113" y="-2" width="40" height="90" fill="#3a3834"/>
<rect x="118" y="0" width="33" height="9" fill="#7a6a60"/>
<rect x="118" y="13" width="33" height="11" fill="#b8ae98"/><rect x="134" y="13" width="8" height="11" fill="#3a3a40"/>
<rect x="118" y="29" width="33" height="10" fill="#8a8478"/>
<rect x="118" y="43" width="33" height="11" fill="#d0c6a4"/>
<rect x="118" y="58" width="33" height="16" fill="#a8b8c8"/><rect x="132" y="58" width="4" height="16" fill="#4a8ab8"/><rect x="140" y="58" width="4" height="16" fill="#5a9ac0"/>
<rect x="126" y="75" width="27" height="13" fill="#d4ccbc"/>
<rect x="13" y="-2" width="83" height="61" fill="#3a3a3c"/><rect x="75" y="58" width="18" height="12" fill="#3a3a3c"/>
<rect x="27" y="1" width="30" height="47" fill="#e8eef2"/><rect x="27" y="1" width="30" height="12" fill="#a0c4e4"/>
<rect x="63" y="9" width="23" height="48" fill="#eef2f4"/><rect x="63" y="9" width="23" height="8" fill="#a8c8e4"/>
<rect x="78" y="28" width="4" height="24" fill="#5a8ab0"/>
<rect x="70" y="58" width="22" height="3" fill="#f4f4f4"/>
<path d="M-2 88V55C8 49 20 48 34 50H55C70 54 76 66 77 88Z" fill="#25252a"/>
<path d="M20 52L48 50L52 76L24 80Z" fill="#e0e0e0"/>
<ellipse cx="33" cy="41" rx="17" ry="24" fill="url(#sk3)"/>
</g>
<svg class="lbl" x="0" y="72" width="128" height="14" viewBox="0 0 128 14"><rect width="128" height="14" rx="2" fill="rgba(28,28,28,.8)"/><text x="3" y="11" font-family="Liberation Sans" font-size="9.6" fill="#f2f2f2" textLength="123" lengthAdjust="spacingAndGlyphs">ΤΟΠΟΣ Α.Ε. (Γεώργιος Ρουβάς)</text></svg>
</svg>
<!-- tile 4 -->
<svg class="a tile" style="top:274px" viewBox="0 0 151 86">
<g filter="url(#bl)">
<rect x="-2" y="-2" width="155" height="90" fill="#e8e3d2"/>
<path d="M-2 -2H26L34 36L-2 44Z" fill="#d8d0a8"/>
<path d="M-2 -2H18L28 28L-2 32Z" fill="#eee8d4"/>
<path d="M80 -2H100L96 30L80 26Z" fill="#d0c8a8"/>
<rect x="86" y="10" width="26" height="60" fill="#f4f0e6"/>
<rect x="108" y="-2" width="45" height="90" fill="#dcd8c6"/>
<rect x="116" y="-2" width="6" height="90" fill="#c8c4ae"/><rect x="130" y="-2" width="5" height="90" fill="#ccc8b4"/>
<path d="M-2 88V36C8 30 20 30 30 36L40 42H76L88 32C96 26 104 30 106 36C112 52 114 70 114 88Z" fill="#262d3a"/>
<path d="M94 56C104 52 118 56 124 66L132 88H96Z" fill="#3a5890"/>
<path d="M40 88L42 52C50 46 72 46 82 52L90 88Z" fill="#dfe2e6"/>
<ellipse cx="54" cy="18" rx="21" ry="30" fill="url(#sk4)"/>
<path d="M34 2C36 -4 48 -6 56 -6C66 -6 74 -2 76 4" stroke="#b8b4b0" stroke-width="3" fill="none"/>
<path d="M40 5c4-2 8-2 11 0M58 5c4-2 8-2 11 0" stroke="#8a7068" stroke-width="1.3" fill="none"/>
<path d="M45 24c6 3 12 3 18 0" stroke="#8a6a62" stroke-width="1.4" fill="none"/>
</g>
</svg>
<!-- tile 5 -->
<svg class="a tile" style="top:362px" viewBox="0 0 151 86">
<g filter="url(#bl)">
<rect x="-2" y="-2" width="155" height="90" fill="#a9b7c5"/>
<rect x="-2" y="-2" width="32" height="90" fill="#dfe3e9"/>
<rect x="31" y="-2" width="2" height="90" fill="#5a5e66"/>
<rect x="33" y="-2" width="33" height="90" fill="#e4e7eb"/>
<circle cx="19" cy="8.5" r="3.5" fill="#333a44"/><circle cx="24" cy="14" r="2.2" fill="#4a5ab0"/>
<circle cx="56" cy="6" r="3" fill="#4a4e56"/><circle cx="60" cy="12" r="2" fill="#6a70b0"/>
<circle cx="14" cy="24" r="10" fill="#2a2e36"/><circle cx="52.5" cy="24" r="8.5" fill="#2a2e36"/>
<path d="M-2 30H18C25 32 26 44 20 48H-2Z" fill="#2d5ca8"/>
<circle cx="53" cy="39" r="9" fill="#2d5ca8"/>
<circle cx="35" cy="40" r="2" fill="#4a6ab8"/>
<path d="M-2 46C8 44 22 48 25 58C26 68 20 76 10 78H-2Z" fill="#232c38"/>
<path d="M40 46C52 44 60 52 60 62C60 72 52 78 44 78C36 76 32 66 34 56C35 50 37 47 40 46Z" fill="#262e3a"/>
<rect x="2" y="54" width="16" height="10" fill="#5a7048"/><rect x="37" y="56" width="16" height="10" fill="#806050"/>
<rect x="112" y="-2" width="41" height="90" fill="#ecebe8"/>
<rect x="121" y="3" width="30" height="20" fill="#b8b0a0"/><rect x="128" y="4" width="4" height="19" fill="#5a78a8"/><rect x="136" y="4" width="3" height="19" fill="#c08050"/>
<rect x="121" y="34" width="30" height="22" fill="#c8b8a8"/><rect x="123" y="36" width="4" height="20" fill="#b04040"/><rect x="131" y="36" width="4" height="20" fill="#a85048"/>
<rect x="121" y="62" width="30" height="16" fill="#8a8478"/><rect x="128" y="62" width="8" height="16" fill="#3a3632"/>
<path d="M78 88C80 70 86 62 98 62C108 62 116 70 116 88Z" fill="#2a3040"/>
<path d="M80 72L100 70L102 88H80Z" fill="#e4e4e4"/>
<ellipse cx="71" cy="54" rx="13" ry="18" fill="url(#sk5)"/>
<path d="M58 46C60 38 70 35 80 38L84 46C76 42 66 42 58 46Z" fill="#3a3230"/>
<path d="M62 62C64 58 70 58 72 66L70 74" stroke="#c8a090" stroke-width="4" fill="none"/>
</g>
<svg class="lbl" x="0" y="72" width="81" height="14" viewBox="0 0 81 14"><rect width="81" height="14" rx="2" fill="rgba(28,28,28,.8)"/><text x="3" y="11" font-family="Liberation Sans" font-size="9.6" fill="#f2f2f2" textLength="76.5" lengthAdjust="spacingAndGlyphs">ΔΗΠΕΘΕ ΚΕΡΚΥΡΑΣ</text></svg>
</svg>
<!-- tile 6 -->
<svg class="a tile" style="top:450px" viewBox="0 0 151 86">
<rect x="0" y="0" width="151" height="86" fill="#6c7072"/>
<g filter="url(#bl3)">
<rect x="-5" y="-5" width="100" height="96" fill="#58606a"/>
<rect x="40" y="-5" width="50" height="30" fill="#8a9ca2"/>
<ellipse cx="30" cy="40" rx="22" ry="30" fill="#45423e"/>
<ellipse cx="60" cy="40" rx="12" ry="18" fill="#3a6492"/>
<rect x="0" y="60" width="40" height="26" fill="#4c5660"/>
<rect x="120" y="-5" width="36" height="96" fill="#6a6a62"/>
</g>
<g filter="url(#bl)">
<path d="M48 88C56 68 70 60 86 58L96 70H124L132 60C144 64 151 72 153 88Z" fill="#d5d1cc"/>
<path d="M86 22C86 48 88 72 106 78C120 78 128 58 128 26C118 18 96 16 86 22Z" fill="url(#sk6)"/>
<path d="M84 30C80 14 92 4 106 4C120 4 134 10 132 30L128 40C126 26 122 20 108 18C96 18 90 22 88 40Z" fill="#9ea3a6"/>
<path d="M88 54C90 72 100 80 108 80C118 80 126 70 124 52C116 60 98 60 88 54Z" fill="#a89c90"/>
<ellipse cx="97" cy="40" rx="7" ry="6" fill="none" stroke="#3a2a24" stroke-width="1.8"/>
<ellipse cx="117" cy="41" rx="7" ry="6" fill="none" stroke="#3a2a24" stroke-width="1.8"/>
<path d="M104 40h6M124 40l6-3" stroke="#3a2a24" stroke-width="1.5"/>
</g>
<svg class="lbl" x="0" y="72" width="82.5" height="14" viewBox="0 0 82.5 14"><rect width="82.5" height="14" rx="2" fill="rgba(28,28,28,.8)"/><text x="3" y="11" font-family="Liberation Sans" font-size="9.6" fill="#f2f2f2" textLength="77.5" lengthAdjust="spacingAndGlyphs">PANOS MAVRONAS</text></svg>
</svg>
<svg class="a" style="left:216px;top:230px" width="12" height="16" viewBox="0 0 12 16"><path d="M1 1V13L4 10L6.5 15L8.5 14L6 9H10Z" fill="#fff" stroke="#222" stroke-width="1"/></svg>
</body></html>
